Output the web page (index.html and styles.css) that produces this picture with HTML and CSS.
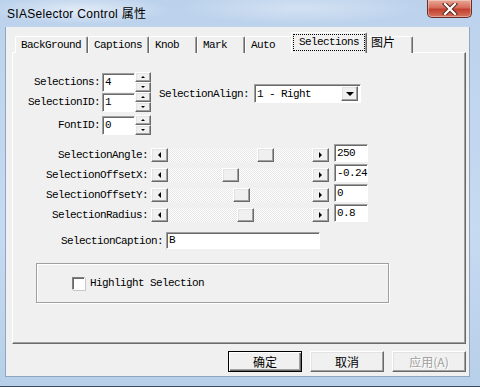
FILE: index.html
```html
<!DOCTYPE html>
<html lang="zh">
<head>
  <meta charset="UTF-8">
  <title>SIASelector Control 属性</title>
  <link rel="stylesheet" href="styles.css">
</head>
<body>
  <div class="window">
    <div class="titlebar">
      <span class="title">SIASelector Control 属性</span>
      <div class="close-btn">
        <svg width="16" height="12" viewBox="0 0 16 12">
          <path d="M3 1 L13 11 M13 1 L3 11" stroke="#5a2a24" stroke-width="4.2" stroke-linecap="square"/>
          <path d="M3 1 L13 11 M13 1 L3 11" stroke="#fff" stroke-width="2.2" stroke-linecap="square"/>
        </svg>
      </div>
    </div>

    <div class="client">
      <div class="tabs">
        <div class="tab">BackGround</div>
        <div class="tab">Captions</div>
        <div class="tab">Knob</div>
        <div class="tab">Mark</div>
        <div class="tab">Auto</div>
        <div class="tab active"><span class="focus">Selections</span></div>
        <div class="tab cjk">图片</div>
      </div>

      <div class="panel">
        <div class="top-section">
          <div class="spin-list">
            <div class="spin-row">
              <label>Selections:</label>
              <div class="edit">4</div>
              <div class="spin"><span class="spin-btn"><i class="arr-up"></i></span><span class="spin-btn"><i class="arr-down"></i></span></div>
            </div>
            <div class="spin-row">
              <label>SelectionID:</label>
              <div class="edit">1</div>
              <div class="spin"><span class="spin-btn"><i class="arr-up"></i></span><span class="spin-btn"><i class="arr-down"></i></span></div>
            </div>
            <div class="spin-row spaced">
              <label>FontID:</label>
              <div class="edit">0</div>
              <div class="spin"><span class="spin-btn"><i class="arr-up"></i></span><span class="spin-btn"><i class="arr-down"></i></span></div>
            </div>
          </div>
          <div class="align-row">
            <label>SelectionAlign:</label>
            <div class="combo">
              <span class="combo-text">1 - Right</span>
              <span class="combo-btn"><i class="arr-down big"></i></span>
            </div>
          </div>
        </div>

        <div class="sliders">
          <div class="slider-row">
            <label>SelectionAngle:</label>
            <div class="scrollbar">
              <span class="sb-btn"><i class="arr-left"></i></span>
              <span class="track"><span class="thumb" style="left: 89px"></span></span>
              <span class="sb-btn"><i class="arr-right"></i></span>
            </div>
            <div class="edit">250</div>
          </div>
          <div class="slider-row">
            <label>SelectionOffsetX:</label>
            <div class="scrollbar">
              <span class="sb-btn"><i class="arr-left"></i></span>
              <span class="track"><span class="thumb" style="left: 54px"></span></span>
              <span class="sb-btn"><i class="arr-right"></i></span>
            </div>
            <div class="edit">-0.24</div>
          </div>
          <div class="slider-row">
            <label>SelectionOffsetY:</label>
            <div class="scrollbar">
              <span class="sb-btn"><i class="arr-left"></i></span>
              <span class="track"><span class="thumb" style="left: 65px"></span></span>
              <span class="sb-btn"><i class="arr-right"></i></span>
            </div>
            <div class="edit">0</div>
          </div>
          <div class="slider-row">
            <label>SelectionRadius:</label>
            <div class="scrollbar">
              <span class="sb-btn"><i class="arr-left"></i></span>
              <span class="track"><span class="thumb" style="left: 69px"></span></span>
              <span class="sb-btn"><i class="arr-right"></i></span>
            </div>
            <div class="edit">0.8</div>
          </div>
        </div>

        <div class="caption-row">
          <label>SelectionCaption:</label>
          <div class="edit wide">B</div>
        </div>

        <div class="group">
          <span class="checkbox"></span>
          <span class="check-label">Highlight Selection</span>
        </div>
      </div>

      <div class="buttons">
        <button class="btn default">确定</button>
        <button class="btn">取消</button>
        <button class="btn disabled">应用(A)</button>
      </div>
    </div>
  </div>
</body>
</html>
```

FILE: styles.css
```css
* {
  margin: 0;
  padding: 0;
  box-sizing: border-box;
}

body {
  width: 480px;
  height: 387px;
  overflow: hidden;
  font-family: "Liberation Mono", "Noto Sans CJK SC", monospace;
  font-size: 11px;
  letter-spacing: -0.6px;
  color: #000;
}

.window {
  width: 480px;
  height: 387px;
  background: linear-gradient(180deg, #bcd2ec 0%, #c6daf1 60%, #b8cfe9 100%);
  border-bottom: 1px solid #3b4a5c;
  display: flex;
  flex-direction: column;
}

/* title bar */
.titlebar {
  height: 27px;
  display: flex;
  align-items: flex-start;
  justify-content: space-between;
  padding-left: 7px;
  background:
    radial-gradient(ellipse 90px 14px at 80px 10px, rgba(255, 255, 255, 0.55), rgba(255, 255, 255, 0)),
    radial-gradient(ellipse 120px 16px at 300px 8px, rgba(255, 255, 255, 0.35), rgba(255, 255, 255, 0));
}

.title {
  font-family: "Liberation Sans", "Noto Sans CJK SC", sans-serif;
  font-size: 12px;
  letter-spacing: 0.3px;
  line-height: 14px;
  margin-top: 7px;
  color: #000;
}

.close-btn {
  width: 45px;
  height: 18px;
  margin-right: 8px;
  border: 1px solid #6b2d27;
  border-top: none;
  border-radius: 0 0 5px 5px;
  background: linear-gradient(180deg, #e9a996 0%, #d66c5a 45%, #c2402f 55%, #d5735d 100%);
  box-shadow: inset 0 0 0 1px rgba(255, 255, 255, 0.35);
  display: flex;
  align-items: center;
  justify-content: center;
}

/* client area */
.client {
  flex: 1;
  margin: 0 10px 9px 5px;
  background: #f0f0f0;
  border: 1px solid #8fa6c1;
  border-top: none;
  padding: 6px 3px 0 6px;
  display: flex;
  flex-direction: column;
}

.tabs {
  height: 20px;
  display: flex;
  align-items: flex-end;
  padding-left: 3px;
  position: relative;
  z-index: 1;
  margin-bottom: -1px;
}

.tab {
  min-width: 48px;
  height: 17px;
  padding: 1px 6px 0 5px;
  line-height: 15px;
  background: #f0f0f0;
  border-top: 1px solid #fff;
  border-left: 1px solid #fff;
  border-right: 1px solid #696969;
  box-shadow: inset -1px 0 #a0a0a0;
  border-radius: 2px 2px 0 0;
  white-space: nowrap;
}

.tab.cjk {
  font-size: 12px;
  letter-spacing: 0;
  padding-top: 0;
}

.tab.active {
  height: 21px;
  margin: 0 -2px;
  padding: 1px 1px 2px;
  position: relative;
  z-index: 2;
  line-height: 15px;
}

.focus {
  display: block;
  height: 17px;
  padding: 0 5px;
  border: 1px dotted #000;
}

.panel {
  width: 454px;
  height: 292px;
  border-top: 1px solid #fff;
  border-left: 1px solid #fff;
  border-right: 1px solid #696969;
  border-bottom: 1px solid #696969;
  box-shadow: inset -1px -1px #a0a0a0;
  padding: 1px 0 0 1px;
}

label {
  text-align: right;
  white-space: nowrap;
}

.edit {
  background: #fff;
  border: 1px solid;
  border-color: #a0a0a0 #fff #fff #a0a0a0;
  box-shadow: inset 1px 1px #696969;
  padding: 1px 2px;
  line-height: 14px;
  white-space: nowrap;
}

/* spin rows */
.top-section {
  display: flex;
  align-items: flex-start;
  margin-top: 18px;
}

.spin-list {
  display: flex;
  flex-direction: column;
  gap: 1px;
}

.spin-row {
  display: grid;
  grid-template-columns: 88px 33px 16px;
  height: 19px;
  align-items: center;
}

.spin-row.spaced {
  margin-top: 3px;
}

.spin-row label {
  padding-right: 2px;
}

.spin-row .edit {
  height: 19px;
}

.spin {
  display: flex;
  flex-direction: column;
  height: 20px;
}

.spin-btn,
.sb-btn,
.combo-btn,
.thumb,
.btn {
  background: #f0f0f0;
  border: 1px solid;
  border-color: #fff #696969 #696969 #fff;
  box-shadow: inset -1px -1px #a0a0a0, inset 1px 1px #e3e3e3;
  display: flex;
  align-items: center;
  justify-content: center;
}

.spin-btn {
  height: 10px;
}

.arr-up,
.arr-down,
.arr-left,
.arr-right {
  display: block;
  width: 0;
  height: 0;
  border: 2px solid transparent;
}

.arr-up {
  border-bottom-color: #000;
  border-top-width: 0;
}

.arr-down {
  border-top-color: #000;
  border-bottom-width: 0;
}

.arr-down.big {
  border-width: 4px 4px 0;
}

.arr-left {
  border-right-color: #000;
  border-width: 3px 3px 3px 0;
}

.arr-right {
  border-left-color: #000;
  border-width: 3px 0 3px 3px;
}

.align-row {
  display: flex;
  align-items: center;
  margin-top: 12px;
  margin-left: 8px;
}

.align-row label {
  width: 90px;
}

.combo {
  display: flex;
  width: 107px;
  height: 19px;
  margin-left: 5px;
  background: #fff;
  border: 1px solid;
  border-color: #a0a0a0 #fff #fff #a0a0a0;
  box-shadow: inset 1px 1px #696969;
  padding: 2px 2px 1px 2px;
}

.combo-text {
  flex: 1;
  line-height: 14px;
}

.combo-btn {
  width: 17px;
  height: 15px;
  margin-top: -1px;
}

/* slider rows */
.sliders {
  margin-top: 10px;
  display: flex;
  flex-direction: column;
  gap: 2px;
}

.slider-row {
  display: grid;
  grid-template-columns: 137px 178px 34px;
  align-items: end;
  height: 18px;
}

.slider-row label {
  padding-right: 3px;
  line-height: 14px;
}

.slider-row .edit {
  height: 18px;
  margin-left: 5px;
  width: 34px;
}

.scrollbar {
  display: flex;
  height: 14px;
}

.sb-btn {
  width: 17px;
  height: 14px;
}

.track {
  flex: 1;
  position: relative;
  background: repeating-conic-gradient(#ffffff 0 25%, #e6e6e6 0 50%) 0 0 / 2px 2px;
}

.thumb {
  position: absolute;
  top: 0;
  width: 17px;
  height: 14px;
}

/* caption */
.caption-row {
  display: grid;
  grid-template-columns: 152px 154px;
  align-items: center;
  margin-top: 10px;
}

.caption-row label {
  padding-right: 3px;
}

.edit.wide {
  height: 17px;
  line-height: 13px;
}

/* group box */
.group {
  width: 353px;
  height: 40px;
  margin: 14px 0 0 22px;
  border: 1px solid #a0a0a0;
  box-shadow: 1px 1px #fff, inset 1px 1px #fff;
  display: flex;
  align-items: center;
  padding-left: 35px;
}

.checkbox {
  width: 13px;
  height: 13px;
  background: #fff;
  border: 1px solid;
  border-color: #808080 #fff #fff #808080;
  box-shadow: inset 1px 1px #696969, 1px 1px #c8c8c8;
  margin-right: 5px;
}

.check-label {
  line-height: 14px;
}

/* dialog buttons */
.buttons {
  display: flex;
  justify-content: flex-end;
  gap: 8px;
  margin-top: 7px;
}

.btn {
  width: 74px;
  height: 21px;
  font-family: "Noto Sans CJK SC", sans-serif;
  font-size: 12px;
  letter-spacing: 0;
  color: #000;
}

.btn.default {
  border: 1px solid #000;
  box-shadow: inset 1px 1px #fff, inset -1px -1px #696969, inset -2px -2px #a0a0a0;
}

.btn.disabled {
  color: #a0a0a0;
  text-shadow: 1px 1px #fff;
}
```
